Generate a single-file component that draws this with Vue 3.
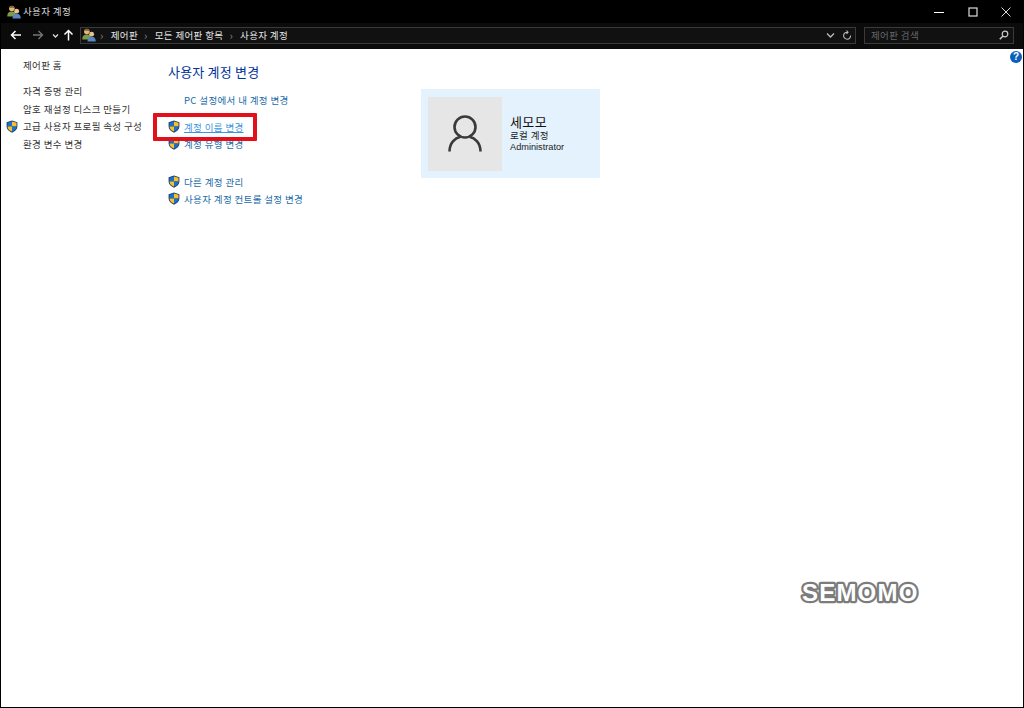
<script setup>
const topLinks = [{ text: '자격 증명 관리' }, { text: '암호 재설정 디스크 만들기' }, { text: '고급 사용자 프로필 속성 구성', shield: true }, { text: '환경 변수 변경' }]
const crumbs = ['제어판', '모든 제어판 항목', '사용자 계정']
const mainLinks = [{ text: '계정 이름 변경', hover: true }, { text: '계정 유형 변경' }]
const otherLinks = ['다른 계정 관리', '사용자 계정 컨트롤 설정 변경']
</script>

<template>
  <div class="window">
    <svg width="0" height="0" class="defs">
      <defs>
        <symbol id="shield" viewBox="0 0 12 13">
          <path d="M6 .5 11.4 2.2V6.6C11.4 9.6 9 11.6 6 12.7 3 11.6.6 9.6.6 6.6V2.2Z" fill="#1d3f75" />
          <path d="M6 1.5V6.4H1.5V2.8Z" fill="#1f6fc4" />
          <path d="M6 1.5 10.5 2.8V6.4H6Z" fill="#f6c02c" />
          <path d="M1.5 6.4H6V11.6C3.6 10.6 1.5 9 1.5 6.4Z" fill="#f6c02c" />
          <path d="M10.5 6.4H6V11.6C8.4 10.6 10.5 9 10.5 6.4Z" fill="#1f6fc4" />
        </symbol>
        <symbol id="users" viewBox="0 0 16 16">
          <circle cx="5.5" cy="4" r="3.2" fill="#e2b77c" />
          <path d="M2.3 3.6C2.8.4 8.2.4 8.7 3.6 7 2.6 4 2.6 2.3 3.6Z" fill="#6f5128" />
          <path d="M.3 13C.3 9 2.5 7.5 5.5 7.5S10.5 9 10.5 13Z" fill="#7d9a4a" />
          <circle cx="11" cy="7" r="2.8" fill="#eac28c" />
          <path d="M6.3 15.5C6.3 11.5 8.5 10 11 10S15.7 11.5 15.7 15.5Z" fill="#5b86c4" />
        </symbol>
      </defs>
    </svg>

    <header class="titlebar">
      <svg class="title-icon"><use href="#users" /></svg>
      <span class="title-text">사용자 계정</span>
      <div class="controls">
        <svg width="10" height="10" viewBox="0 0 10 10"><path d="M0 5.5H10" stroke="#fff" /></svg>
        <svg width="10" height="10" viewBox="0 0 10 10"><rect x="1" y="1" width="8" height="8" fill="none" stroke="#ddd" stroke-width="1.2" /></svg>
        <svg width="10" height="10" viewBox="0 0 10 10"><path d="M.5.5 9.5 9.5M9.5.5.5 9.5" stroke="#ddd" /></svg>
      </div>
    </header>

    <nav class="navbar">
      <div class="nav-buttons">
        <svg class="back" width="12" height="12" viewBox="0 0 12 12"><path d="M11 6H1.5M5.5 2 1.5 6l4 4" fill="none" stroke="#fff" stroke-width="1.5" /></svg>
        <svg class="forward" width="12" height="12" viewBox="0 0 12 12"><path d="M1 6h9.5M6.5 2l4 4-4 4" fill="none" stroke="#777" stroke-width="1.3" /></svg>
        <svg class="recent" width="7" height="7" viewBox="0 0 7 7"><path d="M1 2.5 3.5 5 6 2.5" fill="none" stroke="#ddd" stroke-width="1.3" /></svg>
        <svg class="up" width="11" height="12" viewBox="0 0 11 12"><path d="M5.5 11.5V1.5M1.5 5.5l4-4 4 4" fill="none" stroke="#fff" stroke-width="1.5" /></svg>
      </div>
      <div class="address">
        <svg class="addr-icon"><use href="#users" /></svg>
        <template v-for="c in crumbs" :key="c">
          <span class="sep">›</span>
          <span class="crumb">{{ c }}</span>
        </template>
        <svg class="addr-chevron" width="9" height="7" viewBox="0 0 9 7"><path d="M1 1.5 4.5 5 8 1.5" fill="none" stroke="#bbb" stroke-width="1.3" /></svg>
        <svg class="refresh" width="10" height="11" viewBox="0 0 10 11"><path d="M5.2 2.2A3.5 3.5 0 1 0 8.6 5.5M4.5.5l1.500 1.700L4.500 3.800" fill="none" stroke="#bbb" stroke-width="1.100" /></svg>
      </div>
      <div class="search">
        <span>제어판 검색</span>
        <svg width="10" height="10" viewBox="0 0 10 10"><circle cx="6" cy="4" r="2.8" fill="none" stroke="#ccc" stroke-width="1.2" /><path d="M4 6 .8 9.2" stroke="#ccc" stroke-width="1.5" /></svg>
      </div>
    </nav>

    <main class="content">
      <aside class="sidebar">
        <a class="row home"><span class="slot" />제어판 홈</a>
        <div class="side-links">
          <a v-for="l in topLinks" :key="l.text" class="row">
            <span class="slot"><svg v-if="l.shield" class="shield"><use href="#shield" /></svg></span>
            {{ l.text }}
          </a>
        </div>
      </aside>

      <section class="tasks">
        <h1>사용자 계정 변경</h1>
        <a class="task pc"><span class="slot" />PC 설정에서 내 계정 변경</a>
        <div class="group">
          <a v-for="l in mainLinks" :key="l.text" class="task">
            <span class="slot"><svg class="shield"><use href="#shield" /></svg></span>
            <span :class="{ hover: l.hover }">{{ l.text }}</span>
          </a>
        </div>
        <div class="group others">
          <a v-for="t in otherLinks" :key="t" class="task">
            <span class="slot"><svg class="shield"><use href="#shield" /></svg></span>
            {{ t }}
          </a>
        </div>
      </section>

      <section class="card">
        <div class="avatar">
          <svg width="34" height="37" viewBox="0 0 34 37"><circle cx="17" cy="12" r="10.5" fill="none" stroke="#3a3a3a" stroke-width="2.6" /><path d="M1.500 36.500C1.500 28 7 23 12.500 21.800M32.500 36.500C32.500 28 27 23 21.500 21.800" fill="none" stroke="#3a3a3a" stroke-width="2.6" /></svg>
        </div>
        <div class="info">
          <div class="name">세모모</div>
          <div>로컬 계정</div>
          <div class="role">Administrator</div>
        </div>
      </section>

      <div class="help">?</div>
      <div class="highlight" />
      <svg class="watermark" width="124" height="32" viewBox="0 0 124 32">
        <text x="5" y="25">SEMOMO</text>
      </svg>
    </main>
  </div>
</template>

<style>
html, body { margin: 0; background: #000; }
</style>

<style scoped>
.defs { position: absolute; }
.window {
  box-sizing: border-box;
  width: 1024px;
  height: 708px;
  border: 1px solid #000;
  border-top: 0;
  display: flex;
  flex-direction: column;
  font-family: "Noto Sans CJK KR", "Noto Sans", sans-serif;
  font-size: 9.5px;
  letter-spacing: .36px;
  overflow: hidden;
}
.titlebar {
  height: 23px;
  background: #000;
  color: #ddd;
  display: flex;
  align-items: center;
  padding-left: 6px;
}
.title-icon { width: 14px; height: 14px; margin-right: 2px; }
.title-text { line-height: 23px; }
.controls {
  margin-left: auto;
  display: flex;
  gap: 23.5px;
  padding-right: 12px;
}
.navbar {
  box-sizing: border-box;
  height: 26px;
  padding: 0 0 2px 9px;
  background: #0b0b0b;
  display: flex;
  align-items: center;
  color: #e6e6e6;
}
.nav-buttons { display: flex; align-items: center; width: 70px; }
.back { margin-right: 10px; }
.forward { margin-right: 7.5px; }
.recent { margin-right: 4.5px; }
.address {
  box-sizing: border-box;
  width: 776px;
  height: 17px;
  border: 1px solid #3a3a3a;
  display: flex;
  align-items: center;
  padding-left: 1px;
  background: #111;
}
.addr-icon { width: 14px; height: 14px; margin-right: 3px; }
.sep { color: #888; margin: 0 7px 0 1px; font-size: 11px; line-height: 14px; }
.crumb { margin-right: 5px; white-space: nowrap; line-height: 14px; }
.addr-chevron { margin-left: auto; margin-right: 7px; }
.refresh { margin-right: 3px; }
.search {
  box-sizing: border-box;
  width: 150px;
  height: 17px;
  margin-left: 8px;
  border: 1px solid #3a3a3a;
  background: #111;
  display: flex;
  align-items: center;
  justify-content: space-between;
  padding: 0 4px 0 6px;
  color: #666;
}
.content {
  position: relative;
  flex: 1;
  background: #fff;
  display: flex;
  align-items: flex-start;
}
.slot { display: inline-flex; align-items: center; flex: none; }
.shield { width: 12px; height: 13px; display: block; }
.row, .task { display: flex; align-items: center; white-space: nowrap; }
.sidebar {
  box-sizing: border-box;
  width: 167px;
  padding: 7px 0 0 5px;
  color: #333;
}
.sidebar .slot { width: 17px; }
.row { height: 18px; }
.home { margin-bottom: 8.5px; }
.side-links .row { height: 17.5px; }
.tasks { width: 253px; }
.tasks .slot { width: 16px; }
h1 {
  margin: 14px 0 0;
  height: 18px;
  font-size: 13px;
  font-weight: 400;
  line-height: 18px;
  color: #003399;
  letter-spacing: .2px;
}
.task { height: 17px; color: #1a6ba8; }
.pc { margin-top: 10.5px; }
.group { margin-top: 9.5px; }
.others { margin-top: 21px; }
.hover { color: #3a96dd; text-decoration: underline; }
.card {
  box-sizing: border-box;
  margin-top: 40px;
  width: 179px;
  height: 89px;
  background: #e3f2fd;
  padding: 7px;
  display: flex;
  align-items: center;
}
.avatar {
  width: 74px;
  height: 74px;
  background: #e6e6e6;
  display: flex;
  align-items: center;
  justify-content: center;
  flex: none;
}
.info {
  margin-left: 8px;
  color: #222;
  line-height: 12px;
}
.name { font-size: 13px; line-height: 15px; color: #111; }
.role { font-family: "Liberation Sans", sans-serif; font-size: 9.2px; letter-spacing: 0; }
.help {
  position: absolute;
  right: 1px;
  top: 2px;
  width: 12px;
  height: 12px;
  border-radius: 50%;
  background: #0c5fb8;
  color: #fff;
  font: 700 10px/12px "Liberation Sans", sans-serif;
  letter-spacing: 0;
  text-align: center;
}
.highlight {
  position: absolute;
  left: 152px;
  top: 64px;
  width: 104px;
  height: 28px;
  box-sizing: border-box;
  border: 4px solid #e3101c;
  border-radius: 1px;
}
.watermark {
  position: absolute;
  left: 796px;
  top: 527px;
}
.watermark text {
  font: 700 24px "Liberation Sans", sans-serif;
  letter-spacing: 1.2px;
  fill: #fff;
  stroke: #7c7c7c;
  stroke-width: 4.5px;
  stroke-linejoin: round;
  paint-order: stroke fill;
}
</style>
